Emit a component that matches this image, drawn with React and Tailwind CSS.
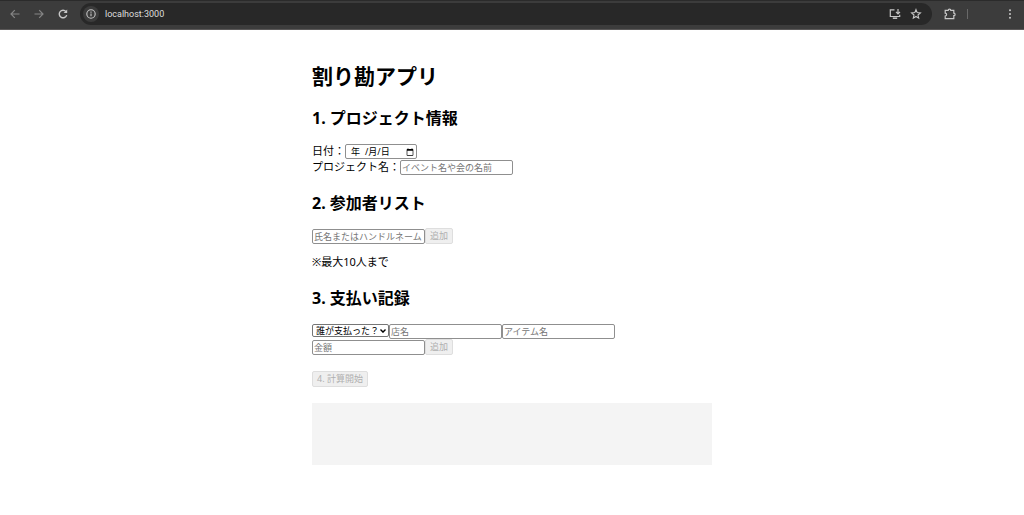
import { useState } from "react";

const textInput =
  "h-[15px] w-[113px] px-px pb-px text-[9px] leading-3 bg-white border border-[#8f8f8f] rounded-[2px] placeholder:text-[#757575]";
const smallButton =
  "h-4 px-1 text-[9px] leading-3 whitespace-nowrap border border-[#cfcfcf] rounded-[2px] bg-[#efefef] text-black disabled:border-[#dedede] disabled:text-[#b0b0b0]";
const iconButton = "flex items-center justify-center w-6 h-6 shrink-0";

function Icon({ children, className = "" }) {
  return (
    <svg
      viewBox="0 0 12 12"
      fill="none"
      stroke="currentColor"
      strokeWidth="1.2"
      className={`w-3 h-3 ${className}`}
      aria-hidden="true"
    >
      {children}
    </svg>
  );
}

function BrowserBar() {
  return (
    <header className="flex items-center h-[30px] pl-[3px] pr-[2px] pb-[2px] bg-[#3c3c3c] border-t border-t-[#2b2b2b] border-b border-b-[#5a5858] text-[#c7c7c7]">
      <button aria-label="戻る" disabled className={`${iconButton} text-[#858585]`}>
        <Icon>
          <path d="M10.5 6H2M5.8 2.2L2 6l3.8 3.8" />
        </Icon>
      </button>
      <button aria-label="進む" disabled className={`${iconButton} text-[#858585]`}>
        <Icon>
          <path d="M1.5 6H10M6.2 2.2L10 6 6.2 9.8" />
        </Icon>
      </button>
      <button aria-label="再読み込み" className={iconButton}>
        <Icon>
          <path d="M9.7 7.1A3.8 3.8 0 1 1 9 3.6" strokeWidth="1.4" />
          <path d="M10.2 1.5v3.6H6.6z" fill="currentColor" stroke="none" />
        </Icon>
      </button>

      <div className="flex flex-1 items-center h-[22px] ml-[5px] mr-[6px] pl-[3px] pr-[6px] rounded-full bg-[#282828]">
        <button
          aria-label="サイト情報"
          className="flex items-center justify-center w-4 h-4 rounded-full bg-[#3c3c3c]"
        >
          <Icon>
            <circle cx="6" cy="6" r="4.2" strokeWidth="1.1" />
            <path d="M6 5.4v2.8M6 3.6v1.1" strokeWidth="1.1" />
          </Icon>
        </button>
        <input
          aria-label="アドレス"
          defaultValue="localhost:3000"
          className="flex-1 min-w-0 ml-[6px] bg-transparent font-['Roboto',sans-serif] text-[9px] leading-4 text-[#dedede] outline-none"
        />
        <button aria-label="アプリをインストール" className="flex items-center justify-center w-5 h-5 mr-px">
          <Icon>
            <path d="M5.5 1.9H1.3v6.6h9.4V6.8" />
            <path d="M3.8 10.2h4.4" strokeWidth="1.5" />
            <path d="M9 1v4.4M7 3.8l2 2 2-2" />
          </Icon>
        </button>
        <button aria-label="ブックマーク" className="flex items-center justify-center w-5 h-5">
          <Icon>
            <path d="M6 1.6l1.2 3 3.2.3-2.4 2.1.7 3.2L6 8.5l-2.7 1.7L4 7 1.6 4.9l3.2-.3z" strokeWidth="1.1" />
          </Icon>
        </button>
      </div>

      <button aria-label="拡張機能" className={iconButton}>
        <Icon>
          <path d="M1.2 2.4h3a1.3 1.3 0 0 1 2.6 0h3v2.7a1.3 1.3 0 0 1 0 2.6v3H1.2V8a1.4 1.4 0 0 0 0-2.8z" />
        </Icon>
      </button>
      <span className="w-px h-[10px] ml-[5px] mr-[30px] bg-[#696969]" />
      <button aria-label="メニュー" className={iconButton}>
        <Icon>
          <g fill="currentColor" stroke="none">
            <circle cx="6" cy="2.2" r="1" />
            <circle cx="6" cy="6" r="1" />
            <circle cx="6" cy="9.8" r="1" />
          </g>
        </Icon>
      </button>
    </header>
  );
}

function Heading({ children }) {
  return <h2 className="mt-4 mb-[13px] text-base leading-6 font-bold">{children}</h2>;
}

export default function App() {
  const [date, setDate] = useState("");
  const [project, setProject] = useState("");
  const [name, setName] = useState("");
  const [members, setMembers] = useState([]);
  const [payer, setPayer] = useState("");
  const [shop, setShop] = useState("");
  const [item, setItem] = useState("");
  const [amount, setAmount] = useState("");
  const [payments, setPayments] = useState([]);
  const [result, setResult] = useState("");

  const addMember = () => {
    setMembers([...members, name]);
    setName("");
  };

  const addPayment = () => {
    setPayments([...payments, { payer, shop, item, amount: Number(amount) }]);
    setShop("");
    setItem("");
    setAmount("");
  };

  const calculate = () => {
    const total = payments.reduce((sum, p) => sum + p.amount, 0);
    setResult(`一人あたり ${Math.ceil(total / members.length)}円`);
  };

  return (
    <div className="min-h-screen bg-white text-black font-['Noto_Sans','Noto_Sans_CJK_JP',sans-serif]">
      <BrowserBar />

      <main className="w-full max-w-[400px] mx-auto pt-[30px] pb-8 text-[11px] leading-4">
        <h1 className="mb-[14px] text-[21px] leading-8 font-bold">割り勘アプリ</h1>

        {/* プロジェクト情報 */}
        <h2 className="mb-[13px] text-base leading-6 font-bold">1. プロジェクト情報</h2>
        <div className="flex items-end h-4">
          <label htmlFor="date">日付：</label>
          <span className="relative flex">
            <input
              id="date"
              type="date"
              value={date}
              onChange={(e) => setDate(e.target.value)}
              className={`h-[15px] w-[72px] px-[2px] text-[9px] leading-3 bg-white border border-[#8f8f8f] rounded-[2px] [&::-webkit-datetime-edit]:p-0 [&::-webkit-calendar-picker-indicator]:m-0 [&::-webkit-calendar-picker-indicator]:w-2 [&::-webkit-calendar-picker-indicator]:h-2 [&::-webkit-calendar-picker-indicator]:p-0 ${
                date ? "" : "[&::-webkit-datetime-edit]:opacity-0"
              }`}
            />
            {!date && (
              <span className="absolute inset-y-0 left-[6px] flex items-center gap-[5px] text-[9px] leading-3 pointer-events-none">
                <span>年</span>
                <span>/月/日</span>
              </span>
            )}
          </span>
        </div>
        <div className="flex items-end h-4">
          <label htmlFor="project">プロジェクト名：</label>
          <input
            id="project"
            value={project}
            onChange={(e) => setProject(e.target.value)}
            placeholder="イベント名や会の名前"
            className={textInput}
          />
        </div>

        {/* 参加者リスト */}
        <Heading>2. 参加者リスト</Heading>
        <div className="flex items-end">
          <input
            aria-label="氏名"
            value={name}
            onChange={(e) => setName(e.target.value)}
            placeholder="氏名またはハンドルネーム"
            className={textInput}
          />
          <button onClick={addMember} disabled={!name || members.length >= 10} className={smallButton}>
            追加
          </button>
        </div>
        {members.length > 0 && (
          <ul>
            {members.map((m, i) => (
              <li key={i}>{m}</li>
            ))}
          </ul>
        )}
        <p className="mt-[10px]">※最大10人まで</p>

        {/* 支払い記録 */}
        <Heading>3. 支払い記録</Heading>
        <div className="flex flex-wrap items-end pt-px">
          <span className="relative flex mb-[2px]">
            <select
              aria-label="誰が支払った？"
              value={payer}
              onChange={(e) => setPayer(e.target.value)}
              className="appearance-none h-[13px] w-[77px] pl-[3px] text-[9px] leading-[11px] bg-white border border-[#767676] rounded-[2px]"
            >
              <option value="">誰が支払った？</option>
              {members.map((m, i) => (
                <option key={i} value={m}>
                  {m}
                </option>
              ))}
            </select>
            <svg
              viewBox="0 0 6 4"
              className="absolute right-[3px] top-[5px] w-[6px] h-1 pointer-events-none"
              fill="none"
              stroke="black"
              strokeWidth="1.4"
              aria-hidden="true"
            >
              <path d="M0.5 0.6L3 3.1 5.5 0.6" />
            </svg>
          </span>
          <input
            aria-label="店名"
            value={shop}
            onChange={(e) => setShop(e.target.value)}
            placeholder="店名"
            className={textInput}
          />
          <input
            aria-label="アイテム名"
            value={item}
            onChange={(e) => setItem(e.target.value)}
            placeholder="アイテム名"
            className={textInput}
          />
          <input
            aria-label="金額"
            value={amount}
            onChange={(e) => setAmount(e.target.value)}
            placeholder="金額"
            inputMode="numeric"
            className={textInput}
          />
          <button onClick={addPayment} disabled={!payer || !amount} className={smallButton}>
            追加
          </button>
        </div>

        <button
          onClick={calculate}
          disabled={!members.length || !payments.length}
          className={`${smallButton} block mt-4`}
        >
          4. 計算開始
        </button>

        <div className="min-h-[62px] mt-4 p-2 bg-[#f4f4f4]">{result}</div>
      </main>
    </div>
  );
}
